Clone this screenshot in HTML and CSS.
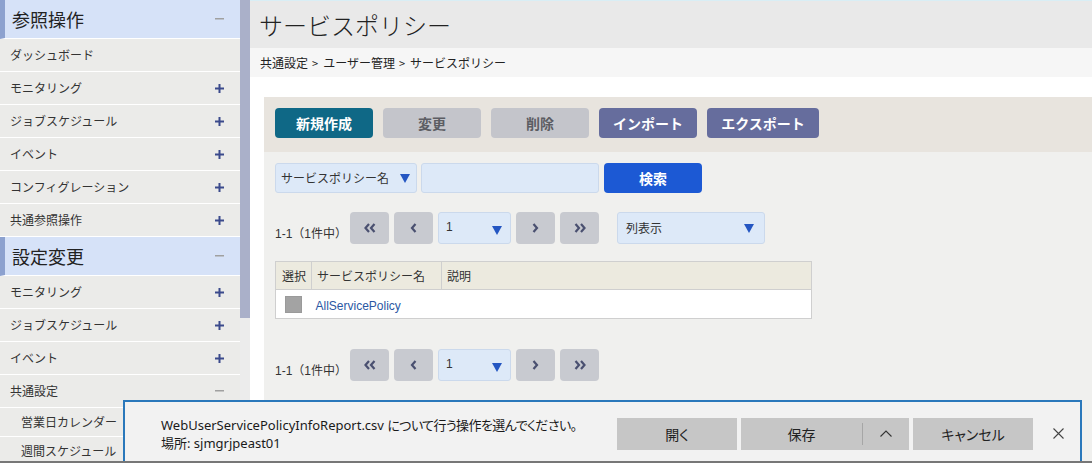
FILE: index.html
```html
<!DOCTYPE html>
<html lang="ja">
<head>
<meta charset="utf-8">
<title>サービスポリシー</title>
<link rel="stylesheet" href="styles.css">
</head>
<body>
<div class="app">
  <nav class="sidebar">
    <div class="nav-head"><span>参照操作</span><svg class="ico-minus" width="9" height="2" viewBox="0 0 9 2"><rect width="9" height="1.5" fill="#a0a0a0"/></svg></div>
    <div class="nav-item"><span>ダッシュボード</span></div>
    <div class="nav-item"><span>モニタリング</span><svg class="ico-plus" width="9" height="9" viewBox="0 0 9 9"><path d="M4.5 0v9M0 4.5h9" stroke="#3b4a8c" stroke-width="2"/></svg></div>
    <div class="nav-item"><span>ジョブスケジュール</span><svg class="ico-plus" width="9" height="9" viewBox="0 0 9 9"><path d="M4.5 0v9M0 4.5h9" stroke="#3b4a8c" stroke-width="2"/></svg></div>
    <div class="nav-item"><span>イベント</span><svg class="ico-plus" width="9" height="9" viewBox="0 0 9 9"><path d="M4.5 0v9M0 4.5h9" stroke="#3b4a8c" stroke-width="2"/></svg></div>
    <div class="nav-item"><span>コンフィグレーション</span><svg class="ico-plus" width="9" height="9" viewBox="0 0 9 9"><path d="M4.5 0v9M0 4.5h9" stroke="#3b4a8c" stroke-width="2"/></svg></div>
    <div class="nav-item"><span>共通参照操作</span><svg class="ico-plus" width="9" height="9" viewBox="0 0 9 9"><path d="M4.5 0v9M0 4.5h9" stroke="#3b4a8c" stroke-width="2"/></svg></div>
    <div class="nav-head"><span>設定変更</span><svg class="ico-minus" width="9" height="2" viewBox="0 0 9 2"><rect width="9" height="1.5" fill="#a0a0a0"/></svg></div>
    <div class="nav-item"><span>モニタリング</span><svg class="ico-plus" width="9" height="9" viewBox="0 0 9 9"><path d="M4.5 0v9M0 4.5h9" stroke="#3b4a8c" stroke-width="2"/></svg></div>
    <div class="nav-item"><span>ジョブスケジュール</span><svg class="ico-plus" width="9" height="9" viewBox="0 0 9 9"><path d="M4.5 0v9M0 4.5h9" stroke="#3b4a8c" stroke-width="2"/></svg></div>
    <div class="nav-item"><span>イベント</span><svg class="ico-plus" width="9" height="9" viewBox="0 0 9 9"><path d="M4.5 0v9M0 4.5h9" stroke="#3b4a8c" stroke-width="2"/></svg></div>
    <div class="nav-item"><span>共通設定</span><svg class="ico-minus" width="9" height="2" viewBox="0 0 9 2"><rect width="9" height="1.5" fill="#a0a0a0"/></svg></div>
    <div class="nav-item nav-sub"><span>営業日カレンダー</span></div>
    <div class="nav-item nav-sub"><span>週間スケジュール</span></div>
  </nav>
  <div class="scrollbar"><div class="thumb"></div></div>
  <main class="main">
    <div class="title-bar">サービスポリシー</div>
    <div class="breadcrumb">共通設定<span class="crumb-sep">&gt;</span>ユーザー管理<span class="crumb-sep">&gt;</span>サービスポリシー</div>
    <section class="panel">
      <div class="toolbar">
        <div class="btn btn-primary">新規作成</div>
        <div class="btn btn-disabled">変更</div>
        <div class="btn btn-disabled">削除</div>
        <div class="btn btn-secondary">インポート</div>
        <div class="btn btn-secondary btn-wide">エクスポート</div>
      </div>
      <div class="panel-body">
        <div class="search-row">
          <div class="select search-select"><span>サービスポリシー名</span><svg class="tri" width="10" height="10" viewBox="0 0 10 10"><polygon points="0,1 10,1 5,10" fill="#2456c2"/></svg></div>
          <div class="search-input"></div>
          <div class="btn btn-search">検索</div>
        </div>
        <div class="pager">
          <span class="count">1-1（1件中）</span>
          <div class="pg"><svg width="12" height="10" viewBox="0 0 12 10"><path d="M5 1L1.5 5L5 9M10.5 1L7 5L10.5 9" fill="none" stroke="#4a5070" stroke-width="2.2"/></svg></div>
          <div class="pg"><svg width="7" height="10" viewBox="0 0 7 10"><path d="M5.5 1L2 5L5.5 9" fill="none" stroke="#4a5070" stroke-width="2.2"/></svg></div>
          <div class="select page-select"><span>1</span><svg class="tri" width="10" height="10" viewBox="0 0 10 10"><polygon points="0,1 10,1 5,10" fill="#2456c2"/></svg></div>
          <div class="pg"><svg width="7" height="10" viewBox="0 0 7 10"><path d="M1.5 1L5 5L1.5 9" fill="none" stroke="#4a5070" stroke-width="2.2"/></svg></div>
          <div class="pg"><svg width="12" height="10" viewBox="0 0 12 10"><path d="M1.5 1L5 5L1.5 9M7 1L10.5 5L7 9" fill="none" stroke="#4a5070" stroke-width="2.2"/></svg></div>
          <div class="select col-select"><span>列表示</span><svg class="tri" width="10" height="10" viewBox="0 0 10 10"><polygon points="0,1 10,1 5,10" fill="#2456c2"/></svg></div>
        </div>
        <table class="grid">
          <thead>
            <tr><th class="c-sel">選択</th><th class="c-name">サービスポリシー名</th><th>説明</th></tr>
          </thead>
          <tbody>
            <tr><td class="c-sel"><span class="check"></span></td><td><span class="link">AllServicePolicy</span></td><td></td></tr>
          </tbody>
        </table>
        <div class="pager pager-bottom">
          <span class="count">1-1（1件中）</span>
          <div class="pg"><svg width="12" height="10" viewBox="0 0 12 10"><path d="M5 1L1.5 5L5 9M10.5 1L7 5L10.5 9" fill="none" stroke="#4a5070" stroke-width="2.2"/></svg></div>
          <div class="pg"><svg width="7" height="10" viewBox="0 0 7 10"><path d="M5.5 1L2 5L5.5 9" fill="none" stroke="#4a5070" stroke-width="2.2"/></svg></div>
          <div class="select page-select"><span>1</span><svg class="tri" width="10" height="10" viewBox="0 0 10 10"><polygon points="0,1 10,1 5,10" fill="#2456c2"/></svg></div>
          <div class="pg"><svg width="7" height="10" viewBox="0 0 7 10"><path d="M1.5 1L5 5L1.5 9" fill="none" stroke="#4a5070" stroke-width="2.2"/></svg></div>
          <div class="pg"><svg width="12" height="10" viewBox="0 0 12 10"><path d="M1.5 1L5 5L1.5 9M7 1L10.5 5L7 9" fill="none" stroke="#4a5070" stroke-width="2.2"/></svg></div>
        </div>
      </div>
    </section>
  </main>
</div>

<div class="download-bar">
  <div class="dl-msg">
    <div>WebUserServicePolicyInfoReport.csv <span class="ja-tight">について行う操作を選んでください。</span></div>
    <div>場所: sjmgrjpeast01</div>
  </div>
  <div class="dl-actions">
    <div class="dl-btn">開く</div>
    <div class="dl-split">
      <div class="dl-save">保存</div>
      <div class="dl-sep"></div>
      <div class="dl-more"><svg width="12" height="7" viewBox="0 0 12 7"><path d="M0.5 6.5L6 1L11.5 6.5" fill="none" stroke="#333" stroke-width="1.1"/></svg></div>
    </div>
    <div class="dl-btn">キャンセル</div>
    <div class="dl-close"><svg width="11" height="11" viewBox="0 0 11 11"><path d="M0.5 0.5L10.5 10.5M10.5 0.5L0.5 10.5" stroke="#444" stroke-width="1.1"/></svg></div>
  </div>
</div>
<div class="frame-bottom"></div>
</body>
</html>
```

FILE: styles.css
```css
* { box-sizing: border-box; }

html, body {
  margin: 0;
  height: 463px;
  overflow: hidden;
}

body {
  position: relative;
  width: 1092px;
  background: #fff;
  color: #333;
  font-family: "Liberation Sans", "Noto Sans CJK JP", sans-serif;
}

.app {
  display: flex;
  height: 463px;
}

/* Sidebar */
.sidebar {
  width: 240px;
  flex: none;
  display: flex;
  flex-direction: column;
  background: #fff;
  font-family: "Noto Sans CJK JP", sans-serif;
}

.nav-head {
  height: 39px;
  flex: none;
  display: flex;
  align-items: center;
  justify-content: space-between;
  padding: 0 16px 0 7px;
  background: #d6e2f8;
  border-left: 5px solid #8ca1cf;
  border-bottom: 1px solid #fff;
  font-size: 18px;
  color: #222;
  line-height: 1;
}

.nav-item {
  height: 33px;
  flex: none;
  display: flex;
  align-items: center;
  justify-content: space-between;
  padding: 0 16px 0 10px;
  background: #ebebe9;
  border-bottom: 1px solid #fff;
  font-size: 12px;
  color: #333;
  line-height: 1;
}

.nav-sub {
  height: 29px;
  padding-left: 21px;
}

.ico-plus, .ico-minus { flex: none; }

.scrollbar {
  width: 10px;
  flex: none;
  background: #ececec;
}

.thumb {
  height: 318px;
  background: #aab0c9;
}

/* Main */
.main {
  flex: 1;
  min-width: 0;
  display: flex;
  flex-direction: column;
  background: #fff;
}

.title-bar {
  height: 48px;
  flex: none;
  display: flex;
  align-items: center;
  padding-left: 9px;
  background: #e9e9e9;
  border-top: 1px solid #d9eef5;
  font-family: "Noto Sans CJK JP", sans-serif;
  font-weight: 300;
  font-size: 24px;
  color: #222;
  line-height: 1;
}

.breadcrumb {
  height: 29px;
  flex: none;
  display: flex;
  align-items: center;
  padding-left: 10px;
  background: #f6f6f6;
  font-family: "Noto Sans CJK JP", sans-serif;
  font-size: 12px;
  color: #222;
}

.crumb-sep {
  margin: 0 5px 0 4px;
  font-size: 11px;
}

.panel {
  flex: 1;
  margin: 20px 0 0 14px;
  background: #f0f0ee;
}

.toolbar {
  display: flex;
  gap: 10px;
  padding: 11px 11px 14px;
  background: #e8e4de;
}

.btn {
  width: 98px;
  height: 30px;
  display: flex;
  align-items: center;
  justify-content: center;
  border-radius: 4px;
  font-family: "Noto Sans CJK JP", sans-serif;
  font-weight: bold;
  font-size: 14px;
  line-height: 1;
}

.btn-primary { background: #0f6886; color: #fff; }
.btn-disabled { background: #c4c5cb; color: #5c5d63; }
.btn-secondary { background: #666d9d; color: #fff; }
.btn-wide { width: 112px; }

.panel-body {
  padding: 11px 11px 0;
}

.search-row {
  display: flex;
  height: 30px;
}

.select {
  display: flex;
  align-items: center;
  justify-content: space-between;
  background: #dde9f8;
  border: 1px solid #cbd9ec;
  border-radius: 3px;
  font-family: "Noto Sans CJK JP", sans-serif;
  font-size: 12px;
  color: #333;
  line-height: 1;
}

.tri { flex: none; }

.search-select {
  width: 142px;
  padding: 0 6px 0 5px;
}

.search-input {
  width: 178px;
  margin-left: 4px;
  background: #dde9f8;
  border: 1px solid #cbd9ec;
  border-radius: 3px;
}

.btn-search {
  margin-left: 5px;
  background: #1c59d4;
  color: #fff;
}

.pager {
  display: flex;
  align-items: center;
  gap: 5px;
  height: 32px;
  margin-top: 19px;
}

.pager-bottom { margin-top: 30px; }

.count {
  width: 70px;
  align-self: flex-end;
  padding-bottom: 3px;
  font-size: 12px;
  color: #333;
}

.pg {
  width: 39px;
  height: 32px;
  display: flex;
  align-items: center;
  justify-content: center;
  background: #c8cad0;
  border-radius: 4px;
}

.page-select {
  width: 73px;
  height: 32px;
  padding: 8px 8px 0 7px;
  align-items: flex-start;
  font-family: "Liberation Sans", sans-serif;
}

.page-select .tri { margin-top: 4px; }

.col-select {
  width: 148px;
  height: 32px;
  margin-left: 13px;
  padding: 0 10px 0 8px;
}

/* Table */
.grid {
  width: 537px;
  margin-top: 17px;
  border-collapse: collapse;
  border: 1px solid #cfcfcf;
  font-family: "Noto Sans CJK JP", sans-serif;
  font-size: 12px;
  color: #333;
}

.grid th {
  height: 28px;
  padding: 0 5px;
  text-align: left;
  font-weight: normal;
  background: #eceadf;
  border-right: 1px solid #cfcfcf;
  border-bottom: 1px solid #cfcfcf;
}

.grid th.c-sel { width: 36px; padding-left: 6px; }
.grid th.c-name { width: 130px; }

.grid td {
  height: 29px;
  padding: 0 4px;
  background: #fff;
}

.grid td.c-sel { text-align: center; padding: 0; }

.check {
  display: block;
  width: 17px;
  height: 17px;
  margin: 0 auto;
  background: #a3a3a3;
  border: 1px solid #9a9a9a;
}

.link {
  font-family: "Liberation Sans", sans-serif;
  color: #2b57a3;
}

/* Download bar (overlay) */
.download-bar {
  position: absolute;
  left: 123px;
  top: 400px;
  width: 959px;
  height: 63px;
  display: flex;
  align-items: center;
  background: #f2f2f2;
  border: 2px solid #2a78bb;
  border-bottom: none;
  font-family: "Noto Sans", "Noto Sans CJK JP", sans-serif;
  font-feature-settings: "palt";
  font-size: 13px;
  color: #1a1a1a;
}

.dl-msg {
  flex: 1;
  padding-left: 36px;
  padding-top: 2px;
  line-height: 18px;
  white-space: nowrap;
}

.ja-tight { letter-spacing: -0.6px; }

.dl-actions {
  display: flex;
  align-items: center;
  gap: 4px;
  padding-top: 2px;
}

.dl-btn, .dl-split {
  height: 32px;
  display: flex;
  align-items: center;
  justify-content: center;
  background: #c6c6c6;
  font-size: 14px;
  color: #222;
}

.dl-btn { width: 120px; }

.dl-split { width: 168px; }

.dl-save {
  flex: 1;
  text-align: center;
}

.dl-sep {
  width: 1px;
  height: 22px;
  background: #a6a6a6;
}

.dl-more {
  width: 46px;
  display: flex;
  justify-content: center;
}

.dl-close {
  width: 43px;
  display: flex;
  justify-content: center;
}

.frame-bottom {
  position: absolute;
  left: 0;
  right: 0;
  bottom: 0;
  height: 2px;
  background: #777;
}
```
